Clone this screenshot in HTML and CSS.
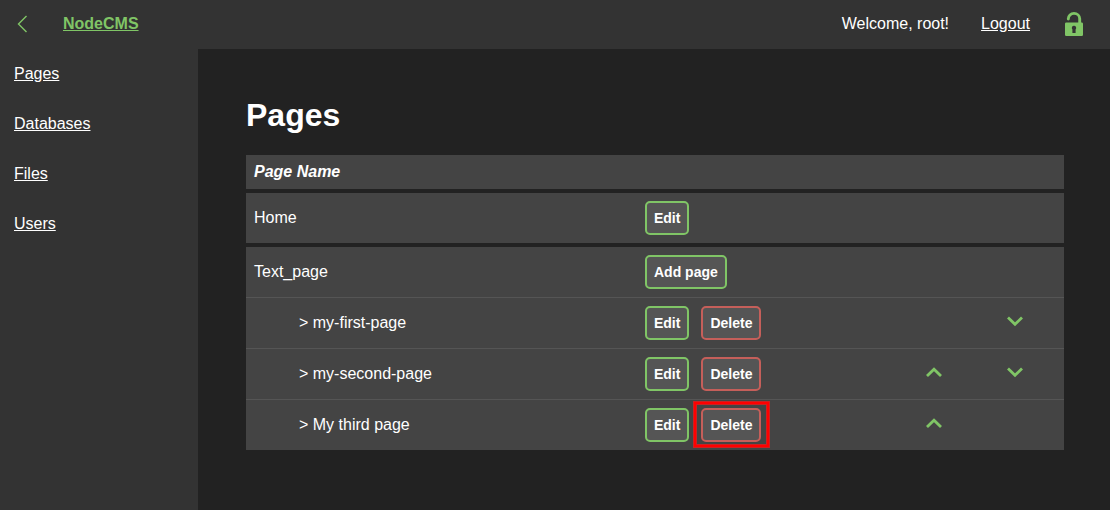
FILE: index.html
```html
<!DOCTYPE html>
<html lang="en">
<head>
<meta charset="utf-8">
<title>NodeCMS - Pages</title>
<link rel="stylesheet" href="styles.css">
</head>
<body>
<header class="topbar">
  <button class="icon-button" type="button" aria-label="Back">
    <svg class="back-icon" viewBox="0 0 12 18" fill="none" stroke="currentColor" stroke-width="1.4"><path d="M10.500 1 L2.500 9 L10.500 17"/></svg>
  </button>
  <a class="brand" href="#">NodeCMS</a>
  <span class="welcome">Welcome, root!</span>
  <a class="logout" href="#">Logout</a>
  <button class="icon-button" type="button" aria-label="Unlocked">
    <svg class="lock-icon" viewBox="0 0 18 25"><path d="M3.300 8V7.700a5.700 5.300 0 0 1 11.400 0v4.500" fill="none" stroke="currentColor" stroke-width="2.900" stroke-linecap="round"/><path fill="currentColor" fill-rule="evenodd" d="M1.300 11.500h15.400q1.300 0 1.300 1.300v10.900q0 1.300-1.300 1.300H1.300Q0 25 0 23.700V12.800q0-1.300 1.300-1.300zM9 14.700a2.200 2.200 0 0 0-1.600 3.700V22h3.200V18.400A2.200 2.200 0 0 0 9 14.700z"/></svg>
  </button>
</header>
<div class="layout">
  <nav class="sidebar">
    <a href="#">Pages</a>
    <a href="#">Databases</a>
    <a href="#">Files</a>
    <a href="#">Users</a>
  </nav>
  <main class="content">
    <h1>Pages</h1>
    <table class="pages">
      <colgroup><col><col class="col-actions"><col class="col-up"><col class="col-down"></colgroup>
      <thead>
        <tr><th colspan="4" scope="col">Page Name</th></tr>
      </thead>
      <tbody>
        <tr class="group">
          <td>Home</td>
          <td><div class="actions"><button class="btn" type="button">Edit</button></div></td>
          <td></td><td></td>
        </tr>
        <tr class="group">
          <td>Text_page</td>
          <td><div class="actions"><button class="btn" type="button">Add page</button></div></td>
          <td></td><td></td>
        </tr>
        <tr class="child">
          <td>&gt; my-first-page</td>
          <td><div class="actions"><button class="btn" type="button">Edit</button><button class="btn danger" type="button">Delete</button></div></td>
          <td></td>
          <td><button class="icon-button" type="button" aria-label="Move down"><svg class="chevron" viewBox="0 0 24 24"><path d="M5 6.500 L12 13.300 L19 6.500"/></svg></button></td>
        </tr>
        <tr class="child">
          <td>&gt; my-second-page</td>
          <td><div class="actions"><button class="btn" type="button">Edit</button><button class="btn danger" type="button">Delete</button></div></td>
          <td><button class="icon-button" type="button" aria-label="Move up"><svg class="chevron" viewBox="0 0 24 24"><path d="M5 14 L12 7.200 L19 14"/></svg></button></td>
          <td><button class="icon-button" type="button" aria-label="Move down"><svg class="chevron" viewBox="0 0 24 24"><path d="M5 6.500 L12 13.300 L19 6.500"/></svg></button></td>
        </tr>
        <tr class="child">
          <td>&gt; My third page</td>
          <td><div class="actions"><button class="btn" type="button">Edit</button><button class="btn danger marked" type="button">Delete</button></div></td>
          <td><button class="icon-button" type="button" aria-label="Move up"><svg class="chevron" viewBox="0 0 24 24"><path d="M5 14 L12 7.200 L19 14"/></svg></button></td>
          <td></td>
        </tr>
      </tbody>
    </table>
  </main>
</div>
</body>
</html>
```
FILE: styles.css
```css
* {
  box-sizing: border-box;
}

body {
  margin: 0;
  min-height: 100vh;
  display: flex;
  flex-direction: column;
  background: #222;
  color: #fff;
  font: 16px/18px "Liberation Sans", Arial, sans-serif;
}

a {
  color: inherit;
}

.topbar {
  display: flex;
  align-items: center;
  padding: 0 27px 2px 16px;
  min-height: 49px;
  background: #333;
}

.icon-button {
  display: block;
  padding: 0;
  border: 0;
  background: none;
  color: #80c566;
  cursor: pointer;
}

.icon-button svg {
  display: block;
}

.back-icon {
  width: 12px;
  height: 18px;
}

.brand {
  margin-left: 35px;
  color: #80c566;
  font-weight: bold;
}

.welcome {
  margin-left: auto;
}

.logout {
  margin: 0 35px 0 32px;
}

.lock-icon {
  width: 18px;
  height: 25px;
}

.layout {
  display: flex;
  flex: 1;
}

.sidebar {
  display: flex;
  flex: none;
  flex-direction: column;
  align-items: flex-start;
  gap: 32px;
  width: 198px;
  padding: 16px 14px;
  background: #333;
}

.content {
  flex: 1;
  padding: 48px 46px 48px 48px;
}

h1 {
  margin: 0 0 22px;
  font-size: 32px;
  line-height: 36px;
}

.pages {
  width: 100%;
  table-layout: fixed;
  border-spacing: 0;
}

.col-actions {
  width: 277px;
}

.col-up {
  width: 81px;
}

.col-down {
  width: 69px;
}

.pages th,
.pages td {
  padding: 8px;
  background: #444;
  text-align: left;
}

.pages th {
  font-style: italic;
}

.group td {
  border-top: 4px solid #222;
}

.child td {
  border-top: 1px solid #555;
}

.child td:first-child {
  padding-left: 53px;
}

.actions {
  display: flex;
  gap: 12px;
}

.btn {
  position: relative;
  padding: 7px;
  border: 2px solid #80c566;
  border-radius: 5px;
  background: #555;
  color: #fff;
  font: bold 14px/16px "Liberation Sans", Arial, sans-serif;
  cursor: pointer;
}

.danger {
  border-color: #c55f5a;
}

.marked::after {
  content: "";
  position: absolute;
  inset: -8px -10px -7px -9px;
  border: 2px solid #f00;
  box-shadow: 0 0 0 1px #c92222, inset 0 0 0 1px #c92222;
}

.chevron {
  width: 24px;
  height: 24px;
  fill: none;
  stroke: currentColor;
  stroke-width: 2.8;
}
```
